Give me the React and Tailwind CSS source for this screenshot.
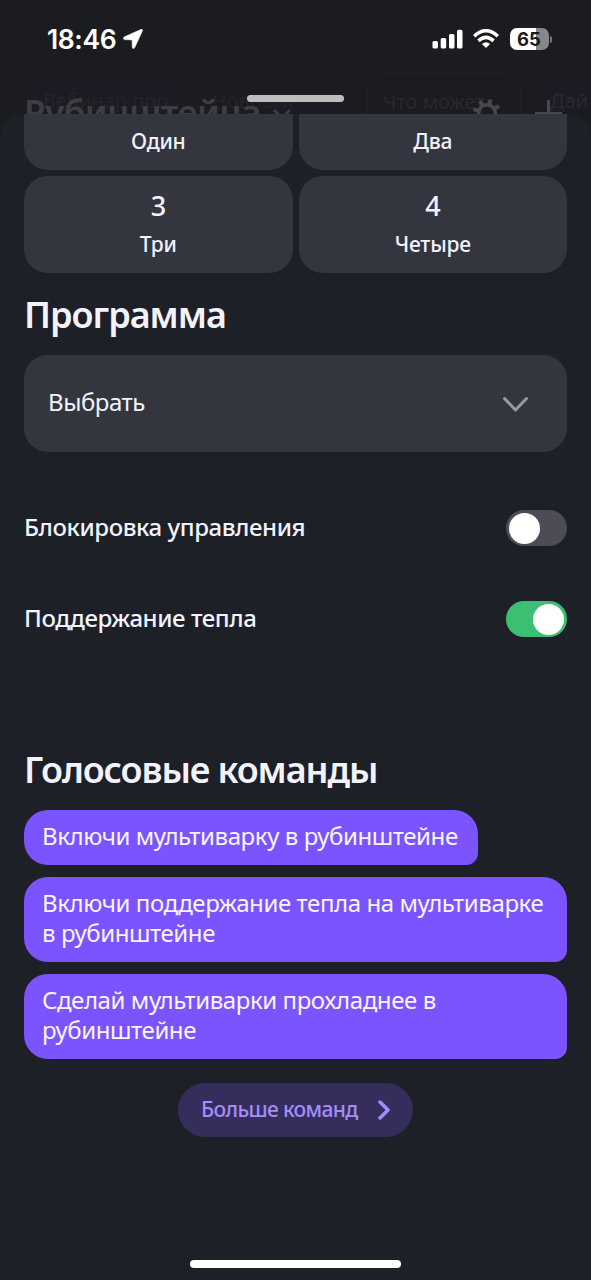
import React from "react";

const presets = [
  { number: "3", label: "Три" },
  { number: "4", label: "Четыре" },
];

function StatusBar() {
  return (
    <div className="flex h-[78px] items-center justify-between pl-[47px] pr-[39px]">
      <div className="flex items-center gap-[7px]">
        <span className="font-['Inter',sans-serif] text-[26.500px] font-semibold leading-8 tracking-[-0.400px]">18:46</span>
        <svg width="20" height="20" viewBox="0 0 20 20" fill="white">
          <path stroke="white" strokeWidth="0.600" d="M17.800 0.500 1.200 8C.1 8.700.3 10.500 1.500 10.600L8.700 10.900Q9.100 11 9.100 11.500L9.300 18.200C9.400 19.800 11 20 11.700 18.600L19.300 2C20 .8 19.200-.1 17.800.5Z" />
        </svg>
      </div>
      <div className="flex items-center">
        <svg width="31" height="20" viewBox="0 0 31 20" fill="white">
          <rect x="0.500" y="12" width="5.500" height="7.500" rx="1.600" />
          <rect x="8.700" y="9" width="5.500" height="10.500" rx="1.600" />
          <rect x="17" y="5" width="5.500" height="14.500" rx="1.600" />
          <rect x="25" y="0.800" width="5.500" height="18.700" rx="1.600" />
        </svg>
        <svg className="ml-[10px]" width="26" height="20" viewBox="0 0 26 20" fill="none" stroke="white" strokeWidth="3.500">
          <path d="M1.200 7.200Q13-3.700 24.800 7.200" />
          <path d="M5.400 11.900Q13 5 20.600 11.900" />
          <path d="M8.900 15Q13 11.400 17.100 15L13 19Z" fill="white" stroke="none" />
        </svg>
        <div className="ml-[11px] flex h-[22px] w-[39px] items-center justify-center rounded-[7px] bg-[linear-gradient(90deg,#fff_0_66%,#87878a_66%)] pr-[1px] font-['Inter',sans-serif] text-[18.500px] font-bold leading-none text-[#1b1c20]">65</div>
        <div className="ml-[1px] h-[7px] w-[2px] rounded-r-full bg-[#77777b]" />
      </div>
    </div>
  );
}

function Backdrop() {
  return (
    <div className="absolute inset-0 overflow-hidden">
      <div className="absolute left-[26px] top-[72px] flex gap-[12px] whitespace-nowrap text-[20px] leading-[58px] text-[#232429]">
        <div className="h-[60px] w-[157px] rounded-[22px] bg-[#1b1b23] pl-[17px]">Вебинар про</div>
        <div className="h-[60px] w-[159px] rounded-[22px] bg-[#1b1b22] pl-[17px]">Новости</div>
        <div className="h-[60px] w-[156px] rounded-[22px] border-2 border-[#1e1f25] pl-[15px] leading-[55px] text-[#28292e]">Что может</div>
        <div className="h-[60px] w-[157px] rounded-[22px] bg-[#1b1b23] pl-[16px] text-[#28292e]">Дай</div>
      </div>
      <div className="absolute left-[24px] top-[88px] text-[35px] font-semibold leading-[48px] tracking-[-0.500px] text-[#3e3e42]">Рубинштейна</div>
      <svg className="absolute left-[272px] top-[107px]" width="20" height="14" fill="none" stroke="#3a3a3e" strokeWidth="3"><path d="m2 3 8 8 8-8" /></svg>
      <svg className="absolute left-[472px] top-[98px]" width="30" height="30" viewBox="-15 -15 30 30" fill="none" stroke="#48484c">
        <circle r="8.300" strokeWidth="3.500" />
        <path d="M0-9V-14M6.400-6.400l3.500-3.500M9 0h5M6.400 6.400l3.500 3.500M0 9v5M-6.400 6.400l-3.500 3.500M-9 0h-5M-6.400-6.400l-3.500-3.500" strokeWidth="4" transform="rotate(15)" />
      </svg>
      <svg className="absolute left-[534px] top-[100px]" width="28" height="28" fill="none" stroke="#48484c" strokeWidth="3"><path d="M14.500 0v28M1 13.500h27" /></svg>
    </div>
  );
}

function Toggle({ label, on }) {
  return (
    <div className="flex h-[36px] items-center justify-between">
      <span className="-mt-[2px] text-[24px] font-medium leading-[36px] tracking-[-0.420px]">{label}</span>
      <div className={on ? "flex h-[36px] w-[61px] items-center justify-end rounded-full bg-[#3bbf73] px-[3px]" : "flex h-[36px] w-[61px] items-center rounded-full bg-[#4b4c55] px-[3px]"}>
        <div className="size-[31px] rounded-full bg-white" />
      </div>
    </div>
  );
}

const bubble = "rounded-[24px] rounded-br-[12px] bg-[#7b54ff] px-[18px] py-[11px] text-[24px] leading-[30px] tracking-[-0.410px] text-[#f8f4ff]";

export default function App() {
  return (
    <div className="flex h-[1280px] w-[591px] flex-col overflow-hidden bg-[#1b1c20] font-['Noto_Sans',sans-serif] text-[#f2f3ff]">
      <header className="relative h-[114px] shrink-0 text-white">
        <Backdrop />
        <div className="relative">
          <StatusBar />
          <div className="mx-auto mt-[17px] h-[7px] w-[97px] rounded-full bg-[#bdbdbe]" />
        </div>
      </header>

      <main className="flex flex-1 flex-col rounded-t-[24px] bg-[#1e2028] px-[24px]">
        <section className="grid grid-cols-2 gap-x-[6px] gap-y-[6.500px] text-center text-[21px] font-medium tracking-[-0.200px]">
          <div className="h-[55.500px] rounded-b-[24px] bg-[#34363f] pt-[11px] leading-[32px]">Один</div>
          <div className="h-[55.500px] rounded-b-[24px] bg-[#34363f] pt-[11px] leading-[32px]">Два</div>
          {presets.map((p) => (
            <div key={p.number} className="h-[97px] rounded-[24px] bg-[#34363f]">
              <div className="pt-[12px] text-[27px] leading-[36px]">{p.number}</div>
              <div className="pt-[4px] leading-[32px]">{p.label}</div>
            </div>
          ))}
        </section>

        <h2 className="mt-[18px] text-[36px] font-semibold leading-[48px] tracking-[-1px]">Программа</h2>
        <div className="mt-[16px] flex h-[97px] items-center justify-between rounded-[24px] bg-[#34363f] pl-[24px] pr-[38px]">
          <span className="-mt-[3px] text-[24px] tracking-[-0.450px]">Выбрать</span>
          <svg width="27" height="16" fill="none" stroke="#9a9ba2" strokeWidth="3" strokeLinecap="round" strokeLinejoin="round"><path d="m2.500 2.500 11 11.500L24.500 2.500" /></svg>
        </div>

        <section className="mt-[58px] flex flex-col gap-[55px]">
          <Toggle label="Блокировка управления" />
          <Toggle label="Поддержание тепла" on />
        </section>

        <h2 className="mt-[109px] text-[36px] font-semibold leading-[48px] tracking-[-1.100px]">Голосовые команды</h2>
        <section className="mt-[16px] flex flex-col items-start gap-[12px]">
          <div className={`${bubble} h-[55px] w-[454px] whitespace-nowrap`}>Включи мультиварку в рубинштейне</div>
          <div className={`${bubble} h-[85px] w-full whitespace-nowrap`}>Включи поддержание тепла на мультиварке<br />в рубинштейне</div>
          <div className={`${bubble} h-[85px] w-full whitespace-nowrap`}>Сделай мультиварки прохладнее в<br />рубинштейне</div>
        </section>
        <button className="mt-[24px] flex h-[54px] w-[235px] shrink-0 items-center self-center rounded-full bg-[#352d5c] pl-[23px] text-[21px] font-medium tracking-[-0.640px] text-[#a48dfa]">
          <span className="w-[158px] whitespace-nowrap text-left">Больше команд</span>
          <svg className="ml-[18px]" width="14" height="20" fill="none" stroke="currentColor" strokeWidth="3.500" strokeLinecap="round" strokeLinejoin="round"><path d="m3 2 8 8-8 8" /></svg>
        </button>
        <div className="mb-[12px] mt-auto h-[8px] w-[211px] self-center rounded-full bg-white" />
      </main>
    </div>
  );
}
